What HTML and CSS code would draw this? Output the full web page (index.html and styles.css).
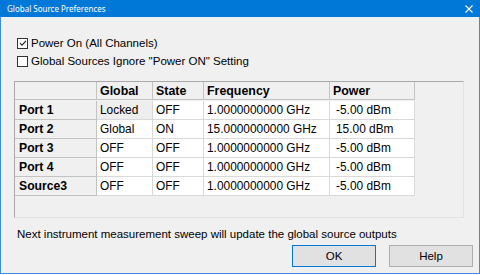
FILE: index.html
```html
<!DOCTYPE html>
<html>
<head>
<meta charset="utf-8">
<link rel="stylesheet" href="styles.css">
</head>
<body>
<div class="window">
  <div class="titlebar">
    <span class="title">Global Source Preferences</span>
    <svg class="close" width="8" height="8" viewBox="0 0 8 8"><path d="M0.5 0.5 L7.5 7.5 M7.5 0.5 L0.5 7.5" stroke="#fff" stroke-width="1.1" fill="none"/></svg>
  </div>
  <div class="content">
    <div class="checks">
      <label class="check"><span class="box"><svg width="8" height="8" viewBox="0 0 8 8"><path d="M1 4.2 L3 6.2 L7 1.8" stroke="#222" stroke-width="1.1" fill="none"/></svg></span>Power On (All Channels)</label>
      <label class="check"><span class="box"></span>Global Sources Ignore "Power ON" Setting</label>
    </div>
    <div class="gridbox">
      <div class="grid">
        <div class="hd corner"></div>
        <div class="hd">Global</div>
        <div class="hd">State</div>
        <div class="hd">Frequency</div>
        <div class="hd">Power</div>

        <div class="rh">Port 1</div>
        <div class="cell ro">Locked</div>
        <div class="cell">OFF</div>
        <div class="cell">1.0000000000 GHz</div>
        <div class="cell pw">-5.00 dBm</div>

        <div class="rh">Port 2</div>
        <div class="cell">Global</div>
        <div class="cell">ON</div>
        <div class="cell">15.0000000000 GHz</div>
        <div class="cell pw">15.00 dBm</div>

        <div class="rh">Port 3</div>
        <div class="cell">OFF</div>
        <div class="cell">OFF</div>
        <div class="cell">1.0000000000 GHz</div>
        <div class="cell pw">-5.00 dBm</div>

        <div class="rh">Port 4</div>
        <div class="cell">OFF</div>
        <div class="cell">OFF</div>
        <div class="cell">1.0000000000 GHz</div>
        <div class="cell pw">-5.00 dBm</div>

        <div class="rh">Source3</div>
        <div class="cell">OFF</div>
        <div class="cell">OFF</div>
        <div class="cell">1.0000000000 GHz</div>
        <div class="cell pw">-5.00 dBm</div>
      </div>
    </div>
    <div class="message">Next instrument measurement sweep will update the global source outputs</div>
    <div class="buttons">
      <button class="btn default">OK</button>
      <button class="btn">Help</button>
    </div>
  </div>
</div>
</body>
</html>
```

FILE: styles.css
```css
html, body {
  margin: 0;
  padding: 0;
  background: #ffffff;
}

body {
  font-family: "Liberation Sans", Arial, sans-serif;
  font-size: 11.5px;
  color: #000;
}

.window {
  width: 480px;
  height: 274px;
  display: flex;
  flex-direction: column;
}

.titlebar {
  height: 17px;
  background: #0078d7;
  display: flex;
  align-items: center;
  justify-content: space-between;
  padding: 0 7px 0 7px;
  box-sizing: border-box;
  flex: none;
}

.title {
  font-family: "Noto Sans", "Open Sans", sans-serif;
  font-size: 8px;
  color: #ffffff;
}

.close {
  display: block;
  margin-top: 1px;
}

.content {
  flex: 1;
  background: #f0f0f0;
  border: 1px solid #3a8ede;
  border-top: none;
  display: flex;
  flex-direction: column;
  padding: 0;
}

.checks {
  padding: 17px 0 0 16px;
  display: flex;
  flex-direction: column;
}

.check {
  height: 18px;
  display: flex;
  align-items: center;
  gap: 3px;
}

.box {
  width: 9px;
  height: 9px;
  border: 1px solid #333;
  background: #fff;
  display: flex;
  align-items: center;
  justify-content: center;
  flex: none;
}

.box svg {
  display: block;
}

.gridbox {
  margin: 11px 0 0 13px;
  width: 450px;
  height: 137px;
  box-sizing: border-box;
  border: 1px solid #a9a9a9;
  border-right-color: #e3e3e3;
  border-bottom-color: #e3e3e3;
  background: #f0f0f0;
}

.grid {
  display: grid;
  grid-template-columns: 82px 56px 51px 126px 85px;
  grid-auto-rows: 19px;
  width: 400px;
}

.grid > div {
  box-sizing: border-box;
  border-right: 1px solid #d9d9d9;
  border-bottom: 1px solid #d9d9d9;
  display: flex;
  align-items: center;
  padding-left: 3px;
  white-space: nowrap;
}

.grid > .hd {
  background: #f0f0f0;
  font-weight: bold;
  font-size: 12.4px;
  border-right: 1px solid #c3c3c3;
  border-bottom: 1px solid #c3c3c3;
  height: 18px;
}

.grid > .rh {
  background: #f0f0f0;
  font-weight: bold;
  font-size: 12.2px;
  padding-left: 4px;
  border-right: 1px solid #c3c3c3;
  border-bottom: 1px solid #c3c3c3;
}

.grid > .cell {
  background: #ffffff;
  font-size: 11.9px;
}

.grid > .cell.ro {
  background: #eeeeee;
}

.grid > .cell.pw {
  padding-left: 6px;
}

.message {
  margin: 9px 0 0 16px;
  height: 14px;
  display: flex;
  align-items: center;
}

.buttons {
  display: flex;
  justify-content: flex-end;
  gap: 13px;
  margin: 4px 6px 0 0;
}

.btn {
  width: 84px;
  height: 22px;
  box-sizing: border-box;
  background: #e1e1e1;
  border: 1px solid #adadad;
  font-family: "Liberation Sans", Arial, sans-serif;
  font-size: 11.5px;
  color: #000;
  padding: 0;
  margin: 0;
}

.btn.default {
  border-color: #0078d7;
}
```
